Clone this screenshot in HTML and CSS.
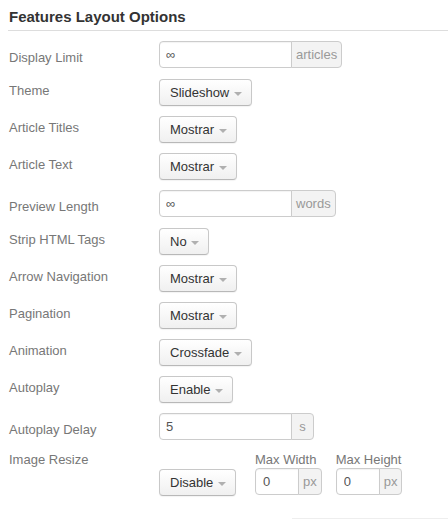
FILE: index.html
```html
<!DOCTYPE html>
<html lang="en">
<head>
    <meta charset="UTF-8">
    <title>Features Layout Options</title>
    <link rel="stylesheet" href="styles.css">
</head>
<body>
    <div class="options-panel">
        <h3 class="panel-title">Features Layout Options</h3>

        <div class="control-group input-row">
            <label class="control-label">Display Limit</label>
            <div class="input-append">
                <input type="text" value="∞">
                <span class="add-on">articles</span>
            </div>
        </div>

        <div class="control-group">
            <label class="control-label">Theme</label>
            <button class="btn">Slideshow <span class="caret"></span></button>
        </div>

        <div class="control-group">
            <label class="control-label">Article Titles</label>
            <button class="btn">Mostrar <span class="caret"></span></button>
        </div>

        <div class="control-group">
            <label class="control-label">Article Text</label>
            <button class="btn">Mostrar <span class="caret"></span></button>
        </div>

        <div class="control-group input-row">
            <label class="control-label">Preview Length</label>
            <div class="input-append">
                <input type="text" value="∞">
                <span class="add-on">words</span>
            </div>
        </div>

        <div class="control-group">
            <label class="control-label">Strip HTML Tags</label>
            <button class="btn">No <span class="caret"></span></button>
        </div>

        <div class="control-group">
            <label class="control-label">Arrow Navigation</label>
            <button class="btn">Mostrar <span class="caret"></span></button>
        </div>

        <div class="control-group">
            <label class="control-label">Pagination</label>
            <button class="btn">Mostrar <span class="caret"></span></button>
        </div>

        <div class="control-group">
            <label class="control-label">Animation</label>
            <button class="btn">Crossfade <span class="caret"></span></button>
        </div>

        <div class="control-group">
            <label class="control-label">Autoplay</label>
            <button class="btn">Enable <span class="caret"></span></button>
        </div>

        <div class="control-group input-row">
            <label class="control-label">Autoplay Delay</label>
            <div class="input-append">
                <input type="text" value="5">
                <span class="add-on">s</span>
            </div>
        </div>

        <div class="control-group resize-row">
            <label class="control-label">Image Resize</label>
            <div class="resize-controls">
                <button class="btn resize-btn">Disable <span class="caret"></span></button>
                <div class="sub-field">
                    <span class="sub-label">Max Width</span>
                    <div class="input-append small">
                        <input type="text" value="0">
                        <span class="add-on">px</span>
                    </div>
                </div>
                <div class="sub-field">
                    <span class="sub-label">Max Height</span>
                    <div class="input-append small">
                        <input type="text" value="0">
                        <span class="add-on">px</span>
                    </div>
                </div>
            </div>
        </div>

        <div class="next-section"></div>
    </div>
</body>
</html>
```

FILE: styles.css
```css
body {
    margin: 0;
    font-family: 'Liberation Sans', Arial, sans-serif;
    font-size: 13px;
    color: #333;
    background: #fff;
}
.options-panel {
    padding: 8px 0 0 8px;
}
.panel-title {
    margin: 0 0 10px 0;
    padding: 0 0 4px 1px;
    font-size: 15px;
    line-height: 18px;
    font-weight: bold;
    color: #333;
    border-bottom: 1px solid #ddd;
}
.control-group {
    display: flex;
    align-items: flex-start;
    margin-bottom: 10px;
}
.control-group.input-row {
    margin-bottom: 11px;
}
.control-label {
    width: 150px;
    padding: 3px 0 0 1px;
    line-height: 18px;
    color: #777;
}
.input-row .control-label {
    padding-top: 8px;
}

/* Dropdown buttons */
.btn {
    height: 27px;
    padding: 0 9px 0 10px;
    font-family: 'Liberation Sans', Arial, sans-serif;
    font-size: 13px;
    line-height: 25px;
    color: #333;
    background: linear-gradient(to bottom, #ffffff, #f0f0f0);
    border: 1px solid #c8c8c8;
    border-bottom-color: #b8b8b8;
    border-radius: 4px;
    box-shadow: 0 1px 1px rgba(0, 0, 0, 0.05);
    cursor: pointer;
}
.caret {
    display: inline-block;
    width: 0;
    height: 0;
    margin-left: 1px;
    vertical-align: middle;
    border-top: 4px solid #b0b0b0;
    border-left: 4px solid transparent;
    border-right: 4px solid transparent;
}

/* Inputs with add-on */
.input-append {
    display: flex;
}
.input-append input {
    box-sizing: border-box;
    width: 133px;
    height: 27px;
    margin: 0;
    padding: 0 6px;
    font-family: 'Liberation Sans', Arial, sans-serif;
    font-size: 13px;
    color: #555;
    border: 1px solid #ccc;
    border-radius: 4px 0 0 4px;
    box-shadow: inset 0 1px 1px rgba(0, 0, 0, 0.05);
}
.add-on {
    box-sizing: border-box;
    min-width: 23px;
    height: 27px;
    margin-left: -1px;
    padding: 0 4px;
    line-height: 25px;
    text-align: center;
    color: #999;
    background: #f3f3f3;
    border: 1px solid #ccc;
    border-radius: 0 4px 4px 0;
}
.input-append.small input {
    width: 44px;
    padding-left: 7px;
}

/* Image resize row */
.resize-row .control-label {
    padding-top: 0;
}
.resize-controls {
    display: flex;
    align-items: flex-end;
}
.resize-btn {
    margin: 0 19px 0 0;
    position: relative;
    top: 1px;
}
.sub-field {
    display: flex;
    flex-direction: column;
    margin-right: 14px;
}
.sub-label {
    line-height: 17px;
    color: #777;
}
.next-section {
    margin: 23px 0 0 284px;
    border-top: 1px solid #eee;
}
```
